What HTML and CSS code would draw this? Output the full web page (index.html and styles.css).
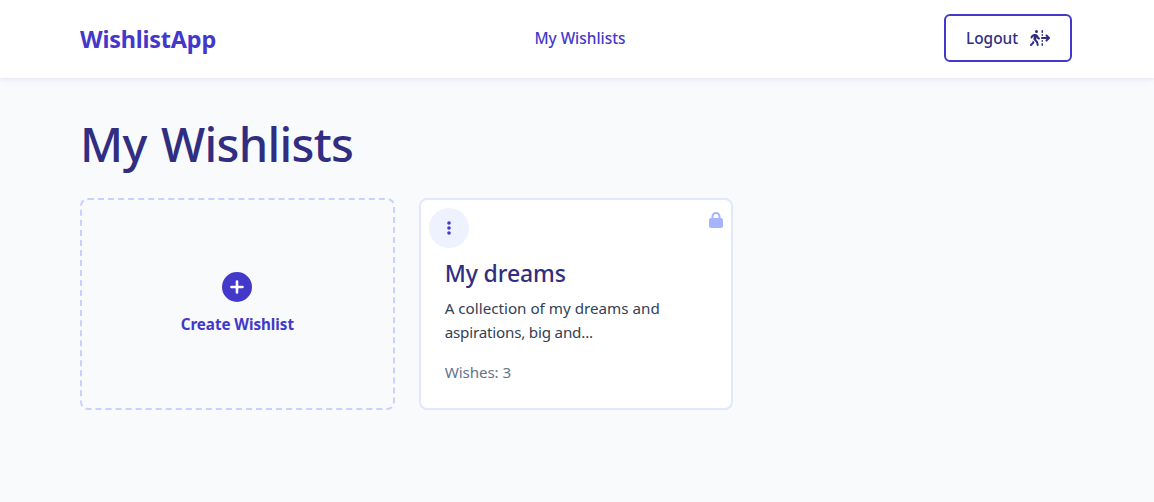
FILE: index.html
```html
<!DOCTYPE html>
<html lang="en">
<head>
<meta charset="utf-8">
<title>WishlistApp</title>
<link rel="stylesheet" href="styles.css">
</head>
<body>
<header class="header">
  <div class="container nav">
    <a class="logo"><span>WishlistApp</span></a>
    <a class="nav-link"><span>My Wishlists</span></a>
    <button class="logout"><span class="logout-label">Logout</span>
      <svg width="20" height="16" viewBox="0 0 640 512" fill="currentColor"><path d="M208 96a48 48 0 1 0 0-96 48 48 0 1 0 0 96zM123.7 200.5c1-.4 1.9-.8 2.9-1.2l-16.9 63.5c-5.6 21.1-.1 43.6 14.7 59.7l70.7 77.1 22 88.1c4.3 17.1 21.7 27.6 38.8 23.3s27.6-21.7 23.3-38.8l-23-92.1c-1.9-7.8-5.8-14.9-11.2-20.8l-49.5-54 19.3-65.5 9.6 23c4.4 10.6 12.5 19.3 22.8 24.5l26.7 13.3c15.8 7.9 35 1.5 42.9-14.3s1.5-35-14.3-42.9L281 232.7l-15.3-36.8C248.5 154.8 208.3 128 163.7 128c-22.8 0-45.3 4.8-66.1 14l-8 3.5c-32.9 14.6-58.1 42.4-69.4 76.5l-2.6 7.8c-5.6 16.8 3.5 34.9 20.2 40.5s34.9-3.5 40.5-20.2l2.6-7.8c5.7-17.1 18.3-30.9 34.7-38.2l8-3.5zm-30 135.1L68.7 398 9.4 457.4c-12.5 12.5-12.5 32.8 0 45.3s32.8 12.5 45.3 0l62.3-62.3c4.6-4.6 8.2-10.1 10.6-16.1l14.5-36.2-40.7-44.4c-2.5-2.7-4.8-5.6-7-8.6zM550.6 153.4c-12.5-12.5-32.8-12.5-45.3 0s-12.5 32.8 0 45.3L530.7 224H384c-17.7 0-32 14.3-32 32s14.3 32 32 32H530.7l-25.4 25.4c-12.5 12.5-12.5 32.8 0 45.3s32.8 12.5 45.3 0l80-80c12.5-12.5 12.5-32.8 0-45.3l-80-80zM392 0c-13.3 0-24 10.7-24 24V72c0 13.3 10.7 24 24 24s24-10.7 24-24V24c0-13.3-10.7-24-24-24zm24 152c0-13.3-10.7-24-24-24s-24 10.7-24 24v16c0 13.3 10.7 24 24 24s24-10.7 24-24V152zM392 320c-13.3 0-24 10.7-24 24v16c0 13.3 10.7 24 24 24s24-10.7 24-24V344c0-13.3-10.7-24-24-24zm24 120c0-13.3-10.7-24-24-24s-24 10.7-24 24v48c0 13.3 10.7 24 24 24s24-10.7 24-24V440z"/></svg>
    </button>
  </div>
</header>
<main class="container main">
  <h1 class="title">My Wishlists</h1>
  <div class="grid">
    <button class="create">
      <svg width="30" height="30" viewBox="0 0 30 30"><circle cx="15" cy="15" r="15" fill="currentColor"/><path d="M15 9.5v11M9.5 15h11" stroke="#fff" stroke-width="2.6" stroke-linecap="round"/></svg>
      <span class="create-label">Create Wishlist</span>
    </button>
    <article class="card">
      <div class="card-top">
        <button class="menu"><svg width="4" height="14" viewBox="0 0 4 14" fill="currentColor"><circle cx="2" cy="2" r="1.8"/><circle cx="2" cy="7" r="1.8"/><circle cx="2" cy="12" r="1.8"/></svg></button>
        <svg class="lock" width="14" height="16" viewBox="0 0 448 512" fill="currentColor"><path d="M144 144v48H304V144c0-44.200-35.800-80-80-80s-80 35.800-80 80zM80 192V144C80 64.500 144.500 0 224 0s144 64.500 144 144v48h16c35.300 0 64 28.700 64 64V448c0 35.300-28.700 64-64 64H64c-35.300 0-64-28.700-64-64V256c0-35.300 28.700-64 64-64H80z"/></svg>
      </div>
      <div class="card-body">
        <h2 class="card-title">My dreams</h2>
        <p class="card-text"><span class="line-one">A collection of my dreams and</span> <span class="line-two">aspirations, big and...</span></p>
        <p class="card-count">Wishes: 3</p>
      </div>
    </article>
  </div>
</main>
</body>
</html>
```
FILE: styles.css
```css
* { box-sizing: border-box; margin: 0; }
body { min-height: 502px; background: #f8fafc; color: #312e81; font: 15.2px/24px "Noto Sans", "Open Sans", sans-serif; }
button { font: inherit; color: inherit; background: none; border: 0; padding: 0; }
.container { width: 992px; margin-left: 80px; }
.header { height: 78px; background: #fff; box-shadow: 0 1px 3px rgba(49, 46, 129, .07), 0 4px 8px rgba(49, 46, 129, .03); }
.nav { height: 76px; display: flex; align-items: center; justify-content: space-between; }
.logo { font-size: 23.4px; line-height: 32px; font-weight: 700; color: #4338ca; letter-spacing: -.2px; padding-top: 2px; }
.nav-link { font-size: 15.4px; font-weight: 500; color: #4338ca; padding-top: 2px; }
.logout { height: 48px; width: 128px; border: 2px solid #4338ca; border-radius: 6px; display: flex; align-items: center; justify-content: space-between; padding: 0 20px; font-weight: 500; }
.logout-label { font-size: 15.4px; padding-top: 2px; }
.main { padding-top: 42px; }
.title { font-size: 47px; line-height: 48px; font-weight: 500; letter-spacing: -.7px; word-spacing: 3px; margin-bottom: 30px; }
.grid { display: grid; grid-template-columns: repeat(3, 1fr); gap: 24px; }
.create { height: 212px; border: 2px dashed #c7d2fe; border-radius: 8px; color: #4338ca; font-weight: 700; display: flex; flex-direction: column; align-items: center; justify-content: center; gap: 10px; }
.create-label { letter-spacing: -.05px; }
.card { height: 212px; border: 2px solid #e0e7ff; border-radius: 8px; background: #fff; }
.card-top { display: flex; justify-content: space-between; padding: 8px 8px 0; }
.menu { width: 40px; height: 40px; border-radius: 50%; background: #eef2ff; color: #4338ca; display: flex; align-items: center; justify-content: center; }
.lock { margin-top: 4px; color: #a5b4fc; }
.card-body { padding: 9px 24px 0; }
.card-title { font-size: 23px; line-height: 32px; font-weight: 500; letter-spacing: -.1px; margin-bottom: 7px; }
.card-text { color: #334155; margin-bottom: 16px; }
.line-one, .line-two { display: inline-block; white-space: nowrap; }
.line-two { letter-spacing: -.2px; }
.card-count { color: #64748b; letter-spacing: -.1px; }
```
